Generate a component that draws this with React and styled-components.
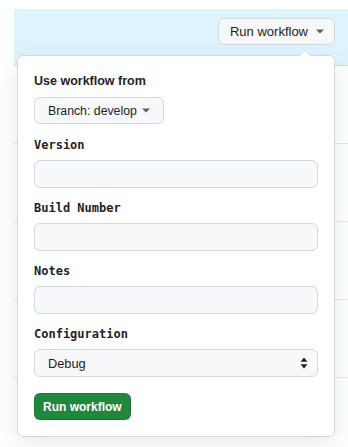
import React from "react";
import styled, { createGlobalStyle } from "styled-components";

const GlobalStyle = createGlobalStyle`
  body {
    margin: 0;
    background: #ffffff;
    font-family: "Liberation Sans", Arial, sans-serif;
    color: #1f2328;
  }
`;

const fields = ["Version", "Build Number", "Notes"];

function Caret() {
  return (
    <svg width="8" height="5" viewBox="0 0 8 5">
      <path d="M0 0.5h8L4 4.5z" fill="#59636e" />
    </svg>
  );
}

function UpDown() {
  return (
    <svg width="8" height="12" viewBox="0 0 8 12">
      <path d="M4 0.5L7.5 4.8H0.5z M4 11.5L7.5 7.2H0.5z" fill="#1f2328" />
    </svg>
  );
}

export default function App() {
  return (
    <Page>
      <GlobalStyle />
      <Band>
        <MenuButton>
          Run workflow
          <Caret />
        </MenuButton>
      </Band>
      {[0, 1, 2, 3, 4].map((i) => (
        <Row key={i} />
      ))}

      <Popover>
        <Heading>Use workflow from</Heading>
        <BranchButton>
          Branch: develop
          <Caret />
        </BranchButton>

        {fields.map((f) => (
          <Field key={f}>
            <Label>{f}</Label>
            <Input />
          </Field>
        ))}

        <Field>
          <Label>Configuration</Label>
          <Select>
            <span>Debug</span>
            <UpDown />
          </Select>
        </Field>

        <RunButton>Run workflow</RunButton>
      </Popover>
    </Page>
  );
}

const Page = styled.div`
  position: relative;
  padding: 9px 0 0 14px;
  height: 447px;
  box-sizing: border-box;
  overflow: hidden;
`;

const Band = styled.div`
  height: 57px;
  box-sizing: border-box;
  background: #ddf4ff;
  border-bottom: 1px solid #b6e3ff;
  display: flex;
  justify-content: flex-end;
  align-items: flex-start;
  padding: 9px 13px 0 0;
`;

const Row = styled.div`
  height: 78px;
  box-sizing: border-box;
  border-bottom: 1px solid #e4e8ec;
`;

const MenuButton = styled.button`
  display: flex;
  align-items: center;
  gap: 8px;
  height: 27px;
  padding: 0 10px 0 11px;
  font-family: inherit;
  font-size: 13px;
  color: #1f2328;
  background: #f6f8fa;
  border: 1px solid #d1d9e0;
  border-radius: 6px;
`;

const Popover = styled.div`
  position: absolute;
  top: 55px;
  left: 17px;
  width: 318px;
  box-sizing: border-box;
  padding: 15px 16px 16px;
  background: #ffffff;
  border: 1px solid #d1d9e0;
  border-radius: 6px;
  box-shadow: 0 8px 24px rgba(140, 149, 159, 0.2);
  display: flex;
  flex-direction: column;
  align-items: flex-start;

  &::before {
    content: "";
    position: absolute;
    top: -5px;
    right: 24px;
    width: 9px;
    height: 9px;
    background: #ffffff;
    border-left: 1px solid #d1d9e0;
    border-top: 1px solid #d1d9e0;
    transform: rotate(45deg);
    border-top-left-radius: 2px;
  }
`;

const Heading = styled.div`
  font-size: 12.5px;
  font-weight: 700;
  line-height: 20px;
  margin-bottom: 6px;
`;

const BranchButton = styled.button`
  display: flex;
  align-items: center;
  gap: 5px;
  height: 27px;
  padding: 0 13px;
  font-family: inherit;
  font-size: 12.3px;
  color: #1f2328;
  background: #f6f8fa;
  border: 1px solid #d1d9e0;
  border-radius: 6px;
  margin-bottom: 12px;
`;

const Field = styled.div`
  align-self: stretch;
  display: flex;
  flex-direction: column;
  margin-bottom: 11px;

  &:last-of-type {
    margin-bottom: 16px;
  }
`;

const Label = styled.div`
  font-family: "DejaVu Sans Mono", monospace;
  font-size: 12px;
  font-weight: 700;
  line-height: 18px;
  margin-bottom: 6px;
`;

const Input = styled.div`
  height: 28px;
  box-sizing: border-box;
  background: #f6f8fa;
  border: 1px solid #d1d9e0;
  border-radius: 6px;
`;

const Select = styled(Input)`
  display: flex;
  align-items: center;
  justify-content: space-between;
  padding: 0 9px 0 13px;
  font-size: 12.8px;
`;

const RunButton = styled.button`
  height: 27px;
  padding: 0 8px;
  font-family: inherit;
  font-size: 12px;
  font-weight: 700;
  color: #ffffff;
  background: #1f883d;
  border: 1px solid rgba(31, 35, 40, 0.15);
  border-radius: 6px;
`;
